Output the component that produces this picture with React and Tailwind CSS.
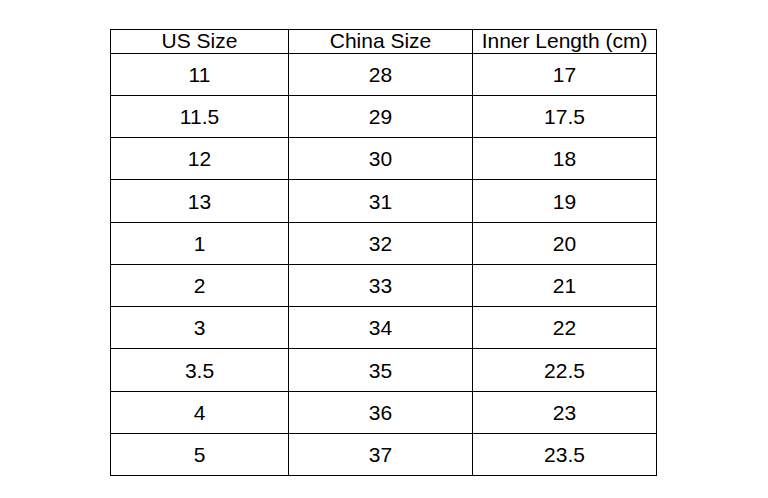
export default function App() {
  const rows = [
    ["11", "28", "17", 42],
    ["11.5", "29", "17.5", 42],
    ["12", "30", "18", 42],
    ["13", "31", "19", 43],
    ["1", "32", "20", 42],
    ["2", "33", "21", 42],
    ["3", "34", "22", 42],
    ["3.5", "35", "22.5", 43],
    ["4", "36", "23", 42],
    ["5", "37", "23.5", 42],
  ];
  return (
    <div className="w-[768px] h-[498px] bg-white pt-[29px] pl-[110px]" style={{ fontFamily: '"Liberation Sans", Arial, sans-serif' }}>
      <div className="grid grid-cols-[178px_184px_184px] w-[547px] border-l border-t border-black text-black">
        {["US Size", "China Size", "Inner Length (cm)"].map((h) => (
          <div key={h} className="h-[24px] border-r border-b border-black flex items-center justify-center text-[21px] leading-none pb-[3px]">
            {h}
          </div>
        ))}
        {rows.map((r, i) =>
          r.slice(0, 3).map((c, j) => (
            <div
              key={i + "-" + j}
              className={(r[3] === 43 ? "h-[43px] " : "h-[42px] ") + "border-r border-b border-black flex items-center justify-center text-[21px] leading-none"}
            >
              {c}
            </div>
          ))
        )}
      </div>
    </div>
  );
}
